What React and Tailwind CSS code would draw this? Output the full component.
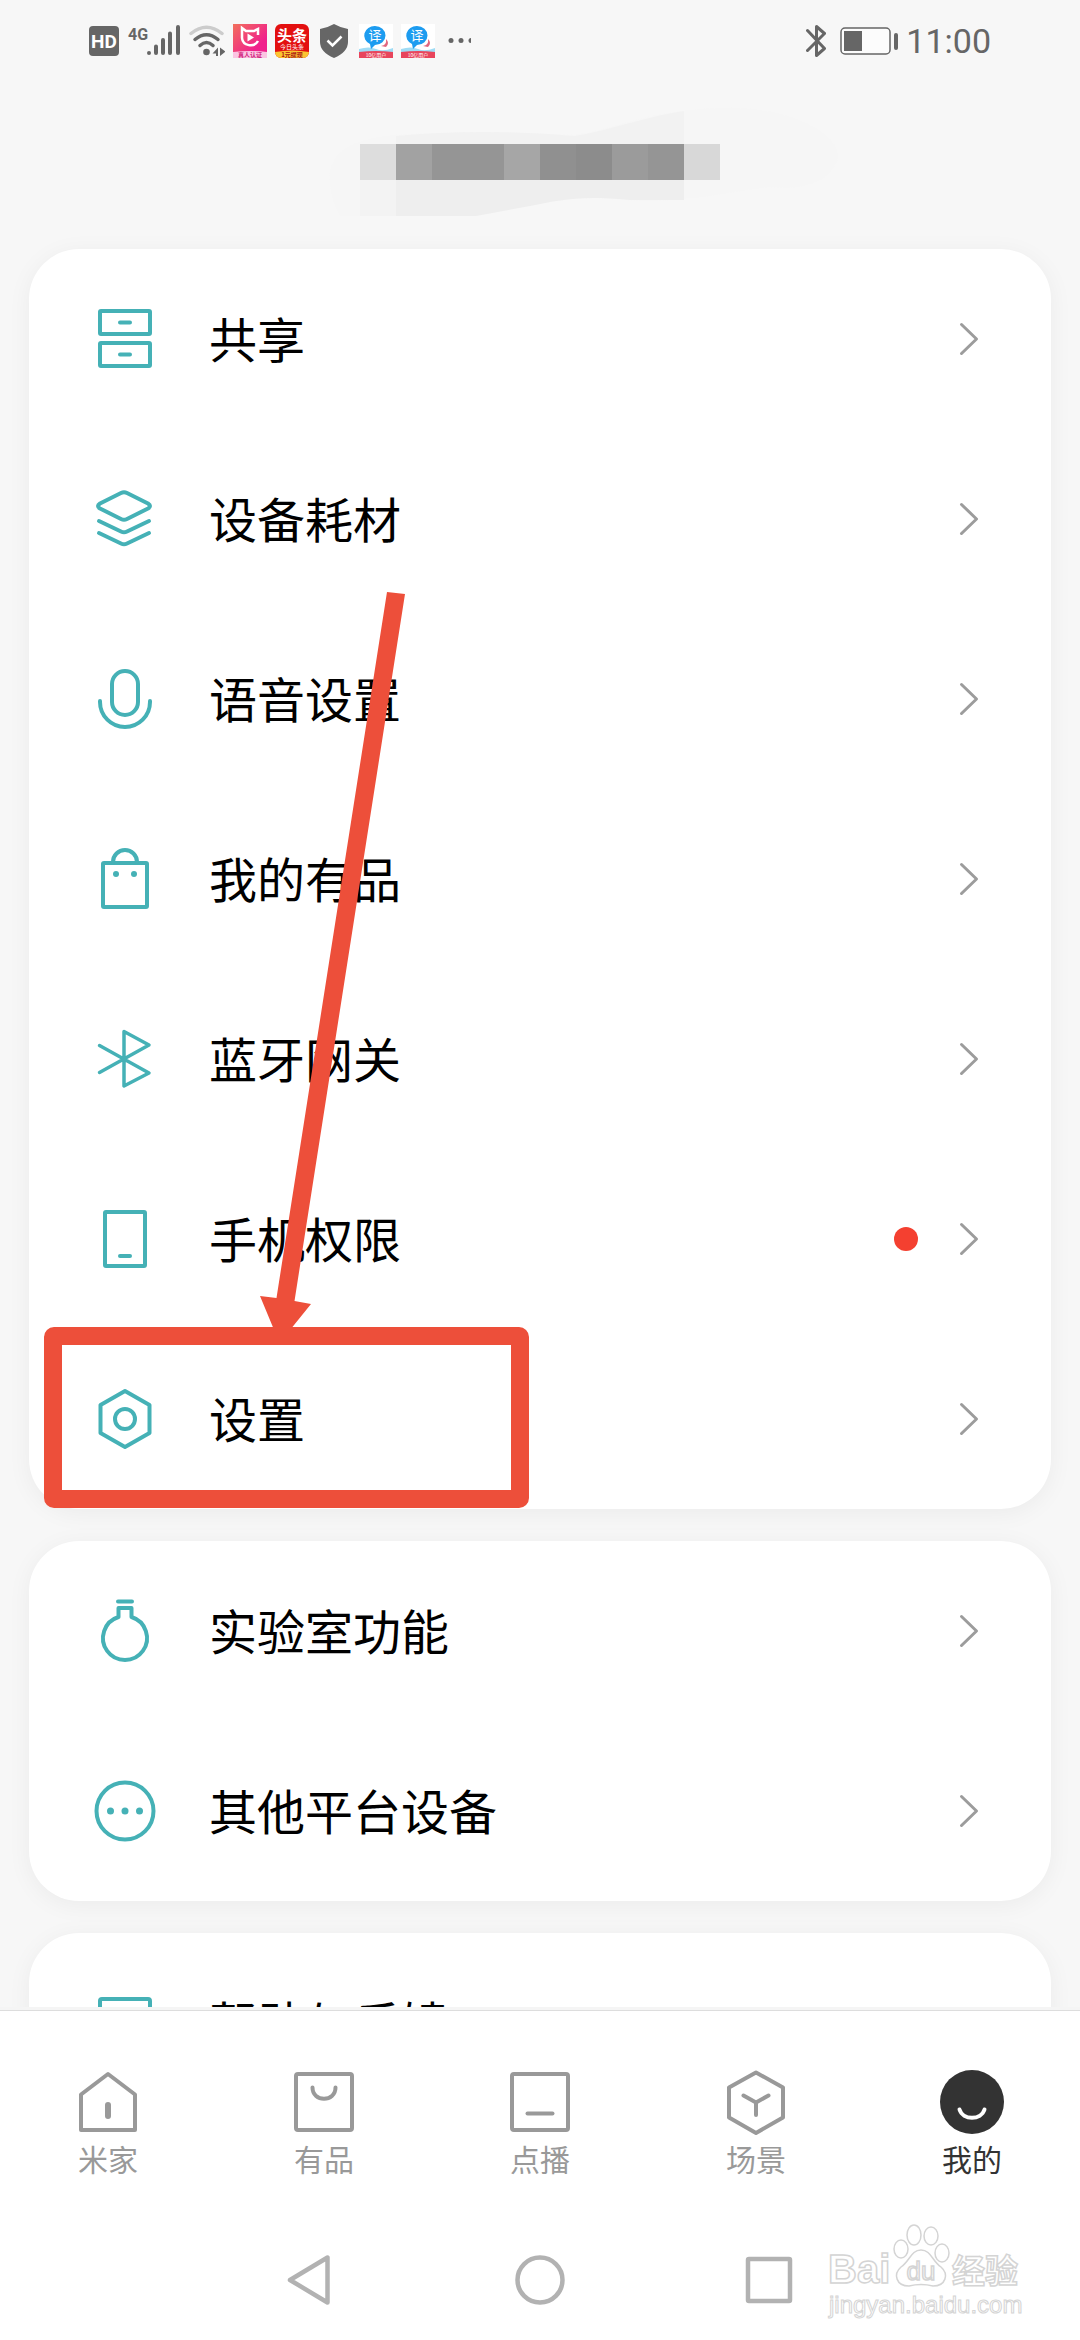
import React from 'react';

const Icon = ({ children, width = 4 }) => (
  <svg
    viewBox="0 0 72 72"
    className="w-[72px] h-[72px] shrink-0"
    fill="none"
    stroke="currentColor"
    strokeWidth={width}
    strokeLinecap="round"
    strokeLinejoin="round"
    aria-hidden="true"
  >
    {children}
  </svg>
);

const icons = {
  share: (
    <Icon>
      <rect x="11" y="8" width="50" height="23" rx="1" />
      <rect x="11" y="40" width="50" height="23" rx="1" />
      <path d="M31 19.500h10M31 51.500h10" />
    </Icon>
  ),
  layers: (
    <Icon>
      <path d="M32 10Q35 8.500 38 10L59 20.500Q63 23 59 25.500L38 36Q35 37.500 32 36L11 25.500Q7 23 11 20.500Z" />
      <path d="M10 38L32 48.500Q35 50 38 48.500L60 38" />
      <path d="M10 50L32 60.500Q35 62 38 60.500L60 50" />
    </Icon>
  ),
  mic: (
    <Icon>
      <rect x="23" y="8" width="26" height="44" rx="13" />
      <path d="M11 38v1a25 25 0 0 0 50 0v-1" />
    </Icon>
  ),
  bag: (
    <Icon>
      <rect x="14" y="20" width="44" height="44" rx="1" />
      <path d="M24 19a12 12 0 0 1 24 0" />
      <circle cx="27" cy="31" r="3" fill="currentColor" stroke="none" />
      <circle cx="45" cy="31" r="3" fill="currentColor" stroke="none" />
    </Icon>
  ),
  bluetooth: (
    <Icon width={3.5}>
      <path d="M10.500 22.500L60 50L35 63V8.500L60 22L10.500 49.500" />
    </Icon>
  ),
  phone: (
    <Icon>
      <rect x="16" y="9" width="40" height="54" rx="1" />
      <path d="M31 53h10" />
    </Icon>
  ),
  settings: (
    <Icon>
      <path d="M36 8L60.500 22V50L36 64L11.500 50V22Z" />
      <circle cx="36" cy="36" r="10" />
    </Icon>
  ),
  lab: (
    <Icon>
      <path d="M29 6.500h14" />
      <path d="M29.500 22V13h13v9A22 22 0 1 1 29.500 22" />
    </Icon>
  ),
  more: (
    <Icon>
      <circle cx="36" cy="36" r="28.500" />
      <g fill="currentColor" stroke="none">
        <circle cx="21.500" cy="36" r="3.500" />
        <circle cx="36" cy="36" r="3.500" />
        <circle cx="50.500" cy="36" r="3.500" />
      </g>
    </Icon>
  ),
  help: (
    <Icon>
      <rect x="11" y="12" width="50" height="46" rx="2" />
    </Icon>
  ),
};

const groups = [
  [
    { icon: 'share', label: '共享' },
    { icon: 'layers', label: '设备耗材' },
    { icon: 'mic', label: '语音设置' },
    { icon: 'bag', label: '我的有品' },
    { icon: 'bluetooth', label: '蓝牙网关' },
    { icon: 'phone', label: '手机权限', dot: true },
    { icon: 'settings', label: '设置' },
  ],
  [
    { icon: 'lab', label: '实验室功能' },
    { icon: 'more', label: '其他平台设备' },
  ],
  [{ icon: 'help', label: '帮助与反馈' }],
];

const tabs = [
  {
    label: '米家',
    icon: (
      <Icon>
        <path d="M36 8L63 28.500V64H9V28.500Z" />
        <path d="M36 39v11" strokeWidth="6" />
      </Icon>
    ),
  },
  {
    label: '有品',
    icon: (
      <Icon>
        <rect x="8" y="8" width="56" height="56" rx="2" />
        <path d="M24.500 21.500c0 15 23 15 23 0" />
      </Icon>
    ),
  },
  {
    label: '点播',
    icon: (
      <Icon>
        <rect x="8" y="8" width="56" height="56" rx="2" />
        <path d="M23.500 47.500h25" />
      </Icon>
    ),
  },
  {
    label: '场景',
    icon: (
      <Icon>
        <path d="M36 6.500L63 21.500V51.500L36 67L9 51.500V21.500Z" />
        <path d="M23.500 29.500L36 36.500L48.500 29.500M36 36.500V49" />
      </Icon>
    ),
  },
  {
    label: '我的',
    active: true,
    icon: (
      <Icon>
        <circle cx="36" cy="36" r="32" fill="currentColor" stroke="none" />
        <path d="M23.500 43.500C27 54.500 45 54.500 48.500 43.500" stroke="#fff" />
      </Icon>
    ),
  },
];

const TranslateApp = () => (
  <svg viewBox="0 0 34 34" className="w-[34px] h-[34px]">
    <rect width="34" height="34" fill="#fff" />
    <path d="M0 25Q10 22 17 25T34 24V30H0Z" fill="#9fdcf5" />
    <path d="M22 22q6-1 5-7q4 4 0 8z" fill="#e0667e" />
    <path d="M16 2a10.500 9.500 0 0 1 0 19l-4 4l-1-5A10.500 9.500 0 0 1 16 2Z" fill="#1d9cf0" />
    <text x="16" y="16" fontSize="13" textAnchor="middle" fill="#fff">译</text>
    <path d="M0 28Q17 26 34 28V34H0Z" fill="#e8455c" />
    <text x="17" y="33" fontSize="5" textAnchor="middle" fill="#fff">10亿用户</text>
  </svg>
);

const StatusBar = () => (
  <div className="h-[82px] px-[89px] flex items-center justify-between text-[#666]">
    <div className="flex items-center gap-2">
      <svg viewBox="0 0 30 30" className="w-[30px] h-[30px]">
        <rect width="30" height="30" rx="4" fill="currentColor" />
        <text x="15" y="22" fontSize="19" fontWeight="700" textAnchor="middle" fill="#fff" className="font-['Roboto',sans-serif]">HD</text>
      </svg>
      <svg viewBox="0 0 53 34" className="w-[53px] h-[34px]" stroke="currentColor" strokeWidth="4" strokeLinecap="round">
        <text x="1" y="16" fontSize="16" fontWeight="700" fill="currentColor" stroke="none" className="font-['Roboto',sans-serif]">4G</text>
        <path d="M22 29v0M29 22.500V29M36 16V29M43 9.500V29M51 3V29" />
      </svg>
      <svg viewBox="0 0 37 34" className="w-[37px] h-[34px]" fill="none" stroke="currentColor" strokeWidth="3.500" strokeLinecap="round">
        <path d="M3 9.500Q18.500 -3 34 9.500" stroke="#ccc" />
        <path d="M7 15.500Q18.500 6 30 15.500" />
        <path d="M12 21.500Q18.500 15.500 25 21.500" />
        <circle cx="18.500" cy="28" r="3.300" fill="currentColor" stroke="none" />
        <path d="M30 23.500V32H28V29.500H24.500ZM32 32V23.500L37.500 27.500Z" fill="currentColor" stroke="none" />
      </svg>
      <svg viewBox="0 0 34 34" className="w-[34px] h-[34px]">
        <defs>
          <linearGradient id="pink" x1="0" y1="0" x2="1" y2="1">
            <stop offset="0" stopColor="#f2705c" />
            <stop offset="0.700" stopColor="#f0208c" />
          </linearGradient>
        </defs>
        <rect width="34" height="34" fill="url(#pink)" />
        <path d="M25 11V5L21 7H13L9 4V14a8.500 8 0 0 0 16 3" fill="none" stroke="#fff" strokeWidth="2.500" />
        <path d="M14.500 9.500L21 13.500L14.500 17.500Z" fill="#fff" />
        <path d="M0 28Q17 26 34 28V34H0Z" fill="#fbc4e2" />
        <text x="17" y="33" fontSize="6" fontWeight="700" textAnchor="middle" fill="#d0207c">真人认证</text>
      </svg>
      <svg viewBox="0 0 34 34" className="w-[34px] h-[34px]">
        <clipPath id="tile">
          <rect width="34" height="34" rx="6" />
        </clipPath>
        <g clipPath="url(#tile)">
          <rect width="34" height="34" fill="#e31010" />
          <text x="17" y="17" fontSize="15" fontWeight="700" textAnchor="middle" fill="#fff">头条</text>
          <text x="17" y="25" fontSize="6" textAnchor="middle" fill="#fff">今日头条</text>
          <path d="M0 28Q17 25 34 28V34H0Z" fill="#fbc531" />
          <text x="17" y="33" fontSize="6" fontWeight="700" textAnchor="middle" fill="#a11">1元提现</text>
        </g>
      </svg>
      <svg viewBox="0 0 34 34" className="w-[34px] h-[34px]">
        <path d="M17 0Q24 4 31 5V18Q31 28 17 34Q3 28 3 18V5Q10 4 17 0Z" fill="currentColor" />
        <path d="M10.500 16.500L15.500 21.500L24.500 12.500" fill="none" stroke="#fff" strokeWidth="2.500" />
      </svg>
      <TranslateApp />
      <TranslateApp />
      <svg viewBox="0 0 30 34" className="w-[30px] h-[34px]" fill="currentColor">
        <circle cx="8" cy="16.500" r="2.500" />
        <circle cx="18" cy="16.500" r="2.500" />
        <path d="M28 14a2.500 2.500 0 0 0 0 5z" />
      </svg>
    </div>
    <div className="flex items-center">
      <svg viewBox="0 0 20 34" className="w-5 h-[34px]" fill="none" stroke="currentColor" strokeWidth="3" strokeLinejoin="round" strokeLinecap="round">
        <path d="M1.500 6.500L18.500 24.500L10.500 31.500V2.500L18.500 9.500L1.500 26.500" />
      </svg>
      <svg viewBox="0 0 60 28" className="w-[60px] h-7 ml-[13px] mr-[7px]">
        <rect x="2" y="1" width="49" height="26" rx="4" fill="#fcfcfc" stroke="currentColor" strokeWidth="1.500" />
        <rect x="5" y="4" width="18" height="20" fill="currentColor" />
        <rect x="55" y="6" width="4" height="17" rx="2" fill="currentColor" />
      </svg>
      <span className="font-['Roboto',sans-serif] text-[34px] leading-10">11:00</span>
    </div>
  </div>
);

// Account name, masked
const AccountName = () => (
  <header className="h-[167px] flex justify-center pt-[18px]">
    <svg viewBox="0 0 600 130" className="w-[600px] h-[130px]" role="img" aria-label="account">
      <path d="M90 72Q94 40 155 35T335 35C390 25 410 10 480 8C540 5 600 30 598 58C590 85 560 90 530 87C480 92 450 104 380 100C340 95 320 100 290 106L236 116H100Q88 95 90 72Z" fill="#f6f6f6" />
      <path d="M156 36Q240 28 335 36C370 30 405 17 444 11V44H156Z" fill="#f2f2f2" />
      <path d="M120 80H156V116H120Z" fill="#f3f3f3" />
      <path d="M156 80H444V100H390C340 95 320 100 290 106L236 116H156Z" fill="#eee" />
      <rect x="120" y="44" width="36" height="36" fill="#ddd" />
      <rect x="156" y="44" width="36" height="36" fill="#a2a2a2" />
      <rect x="192" y="44" width="72" height="36" fill="#959595" />
      <rect x="264" y="44" width="36" height="36" fill="#a6a6a6" />
      <rect x="300" y="44" width="36" height="36" fill="#909090" />
      <rect x="336" y="44" width="36" height="36" fill="#8c8c8c" />
      <rect x="372" y="44" width="36" height="36" fill="#9b9b9b" />
      <rect x="408" y="44" width="36" height="36" fill="#959595" />
      <rect x="444" y="44" width="36" height="36" fill="#d8d8d8" />
    </svg>
  </header>
);

const MenuRow = ({ icon, label, dot }) => (
  <button type="button" className="w-full h-[180px] flex items-center pl-[60px] pr-[70px] text-left">
    <span className="text-[#45b1b6]">{icons[icon]}</span>
    <span className="ml-12 flex-1 pb-1 text-[48px] leading-[72px] text-black">{label}</span>
    {dot && <span className="w-6 h-6 mr-[39px] rounded-full bg-[#f44030]" />}
    <svg viewBox="0 0 24 36" className="w-6 h-9" fill="none" stroke="#9c9c9c" strokeWidth="3" strokeLinecap="round" strokeLinejoin="round" aria-hidden="true">
      <path d="M4.500 3.500L19.500 18L4.500 32.500" />
    </svg>
  </button>
);

// Arrow and frame pointing at the settings row
const Highlight = () => (
  <svg viewBox="0 0 520 1260" className="absolute top-0 left-0 w-[520px] h-[1260px] pointer-events-none" aria-hidden="true">
    <path d="M358 343L376 345L265.500 1052L282 1055L250.500 1094L231 1047L247.500 1049Z" fill="#ed4f3a" />
    <rect x="24" y="1087" width="467" height="163" rx="1" fill="none" stroke="#ed4f3a" strokeWidth="18" strokeLinejoin="round" />
  </svg>
);

const Watermark = () => (
  <svg
    viewBox="0 0 210 100"
    className="absolute right-[50px] bottom-[20px] w-[210px] h-[100px] pointer-events-none font-['Liberation_Sans','Noto_Sans_CJK_SC',sans-serif]"
    fill="#fff"
    stroke="#d4d4d4"
    strokeWidth="1.500"
    aria-hidden="true"
  >
    <text x="8" y="63" fontSize="40" fontWeight="700">Bai</text>
    <path d="M101 30C111 30 112 41 121 47C129 54 126 66 113 66Q101 63 89 66C76 66 73 54 81 47C90 41 91 30 101 30Z" />
    <ellipse cx="81" cy="29" rx="7" ry="9" />
    <ellipse cx="94" cy="15" rx="7" ry="10" />
    <ellipse cx="111" cy="16" rx="7" ry="9" />
    <ellipse cx="122" cy="33" rx="7" ry="9" />
    <text x="101" y="60" fontSize="26" textAnchor="middle">du</text>
    <text x="132" y="63" fontSize="33" fontWeight="700">经验</text>
    <text x="9" y="93" fontSize="24" strokeWidth="1">jingyan.baidu.com</text>
  </svg>
);

const App = () => {
  return (
    <div className="relative h-screen flex flex-col overflow-hidden bg-[#f7f7f7] font-['Noto_Sans_CJK_SC',sans-serif]">
      <StatusBar />
      <AccountName />
      <main className="flex-1 min-h-0 flex flex-col gap-8 px-[29px]">
        {groups.map((rows, i) => (
          <section key={i} className="relative shrink-0 rounded-[50px] bg-white shadow-[0_4px_24px_rgba(0,0,0,0.05)]">
            {rows.map((row) => (
              <MenuRow key={row.label} {...row} />
            ))}
            {i === 0 && <Highlight />}
          </section>
        ))}
      </main>
      <footer className="relative border-t-[3px] border-[#f5f5f5] bg-white">
        <nav className="grid grid-cols-5 border-t border-[#ddd] pt-[55px]">
          {tabs.map((tab) => (
            <button
              key={tab.label}
              type="button"
              className={`flex flex-col items-center ${tab.active ? 'text-[#333]' : 'text-[#999]'}`}
            >
              {tab.icon}
              <span className="pb-1 text-[30px] leading-10">{tab.label}</span>
            </button>
          ))}
        </nav>
        <div className="flex justify-center gap-[158px] pt-[62px] pb-6 text-[#b2b2b2]">
          <button type="button" aria-label="返回">
            <Icon width={4.5}>
              <path d="M53.500 13.500V58.500L16 36Z" />
            </Icon>
          </button>
          <button type="button" aria-label="主页">
            <Icon width={4.5}>
              <circle cx="36" cy="36" r="22.500" />
            </Icon>
          </button>
          <button type="button" aria-label="最近任务">
            <Icon width={4.5}>
              <rect x="14" y="15" width="42" height="42" rx="1" />
            </Icon>
          </button>
        </div>
        <Watermark />
      </footer>
    </div>
  );
};

export default App;
